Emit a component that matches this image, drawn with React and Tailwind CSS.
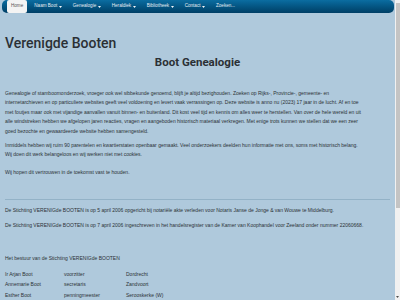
import React from "react";

const Arrow = () => (
  <svg width="3" height="2" viewBox="0 0 3 2" className="ml-[1.5px]">
    <polygon points="0,0 3,0 1.5,2" fill="#f2f6fa" />
  </svg>
);

const navItems = [
  { label: "Naam Boot", arrow: true },
  { label: "Genealogie", arrow: true },
  { label: "Heraldiek", arrow: true },
  { label: "Bibliotheek", arrow: true },
  { label: "Contact", arrow: true },
  { label: "Zoeken...", arrow: false },
];

export default function App() {
  const body = "font-['Liberation_Sans',Arial,sans-serif] text-[5px] leading-[9.5px] text-[#2c3236]";
  return (
    <div className="w-[400px] h-[300px] overflow-hidden flex bg-[#afc9dc]">
      <div className="flex-1 min-w-0 flex flex-col">
        <nav className="ml-[2px] mr-[1px] h-[17px] rounded-[5px] bg-gradient-to-b from-[#0b6da1] to-[#003f66] flex items-center pl-[5px] gap-[3px] font-['Liberation_Sans',Arial,sans-serif] text-[4.6px]">
          <div className="h-[13px] px-[4px] flex items-center bg-[#f3f3f3] rounded-[2px] text-[#555]">Home</div>
          {navItems.map((it) => (
            <div key={it.label} className="h-[13px] px-[4px] flex items-center text-[#e4edf3]">
              <span>{it.label}</span>
              {it.arrow && <Arrow />}
            </div>
          ))}
        </nav>
        <div className="px-[5px]">
          <h1 className="mt-[22px] font-['Roboto',sans-serif] text-[14px] leading-[16px] font-medium text-[#2b3035]">Verenigde Booten</h1>
          <h2 className="mt-[4.5px] text-center font-['Roboto',sans-serif] text-[11.5px] leading-[13px] font-bold text-[#2b3035]">Boot Genealogie</h2>
          <div className={body + " mt-[20px] whitespace-nowrap"}>
            <p>
              Genealogie of stamboomonderzoek, vroeger ook wel sibbekunde genoemd, blijft je altijd bezighouden. Zoeken op Rijks-, Provincie-, gemeente- en<br />
              internetarchieven en op particuliere websites geeft veel voldoening en levert vaak verrassingen op. Deze website is anno nu (2023) 17 jaar in de lucht. Af en toe<br />
              met foutjes maar ook met vijandige aanvallen vanuit binnen- en buitenland. Dit kost veel tijd en kennis om alles weer te herstellen. Van over de hele wereld en uit<br />
              alle windstreken hebben we afgelopen jaren reacties, vragen en aangeboden historisch materiaal verkregen. Met enige trots kunnen we stellen dat we een zeer<br />
              goed bezochte en gewaardeerde website hebben samengesteld.
            </p>
            <p className="mt-[4.5px]">
              Inmiddels hebben wij ruim 90 parentelen en kwartierstaten openbaar gemaakt. Veel onderzoekers deelden hun informatie met ons, soms met historisch belang.<br />
              Wij doen dit werk belangeloos en wij werken niet met cookies.
            </p>
            <p className="mt-[8px]">Wij hopen dit vertrouwen in de toekomst vast te houden.</p>
          </div>
          <div className="mt-[21.5px] h-px bg-[#93b2c7]" />
          <div className={body + " mt-[6px] whitespace-nowrap"}>
            <p>De Stichting VERENIGde BOOTEN is op 5 april 2006 opgericht bij notariële akte verleden voor Notaris Janse de Jonge &amp; van Wouwe te Middelburg.</p>
            <p className="mt-[5.8px]">De Stichting VERENIGde BOOTEN is op 7 april 2006 ingeschreven in het handelsregister van de Kamer van Koophandel voor Zeeland onder nummer 22060668.</p>
            <p className="mt-[23px]">Het bestuur van de Stichting VERENIGde BOOTEN</p>
            <div className="mt-[6px] grid grid-cols-[59px_62px_1fr] leading-[10.3px]">
              <span>Ir Arjan Boot</span><span>voorzitter</span><span>Dordrecht</span>
              <span>Annemarie Boot</span><span>secretaris</span><span>Zandvoort</span>
              <span>Esther Boot</span><span>penningmeester</span><span>Serooskerke (W)</span>
            </div>
          </div>
        </div>
      </div>
      <div className="w-[5px] h-[300px] bg-[#f1f1f1] flex flex-col">
        <div className="h-[3px]" />
        <div className="mx-[0.5px] h-[205px] bg-[#c4c4c4]" />
        <div className="flex-1" />
        <svg width="5" height="4" viewBox="0 0 5 4" className="mb-[1px]">
          <polygon points="1,1 4,1 2.5,3" fill="#505050" />
        </svg>
      </div>
    </div>
  );
}
